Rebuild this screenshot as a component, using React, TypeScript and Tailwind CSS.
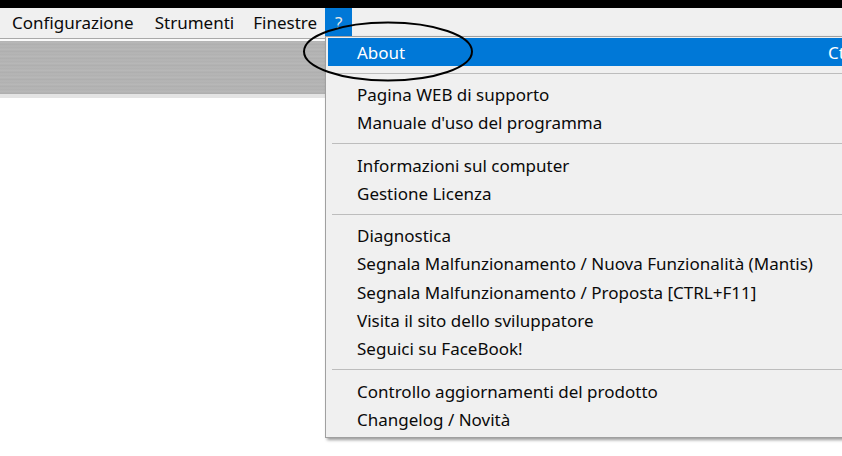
import React from 'react';

const groups: string[][] = [
  ['Pagina WEB di supporto', "Manuale d'uso del programma"],
  ['Informazioni sul computer', 'Gestione Licenza'],
  [
    'Diagnostica',
    'Segnala Malfunzionamento / Nuova Funzionalità (Mantis)',
    'Segnala Malfunzionamento / Proposta [CTRL+F11]',
    'Visita il sito dello sviluppatore',
    'Seguici su FaceBook!',
  ],
  ['Controllo aggiornamenti del prodotto', 'Changelog / Novità'],
];

const Separator = () => (
  <div className="h-[14px] flex items-center pl-[4px]">
    <div className="w-full h-px bg-[#bdbdbd]" />
  </div>
);

const MenuItem = ({ label, active, shortcut }: { label: string; active?: boolean; shortcut?: string }) => (
  <div
    className={
      'h-[28.3px] flex items-center pl-[29px] whitespace-nowrap ' +
      (active ? 'bg-[#0078d7] text-white' : 'text-[#0a0a0a]')
    }
  >
    <span className="w-[471px] shrink-0">{label}</span>
    {shortcut && <span>{shortcut}</span>}
  </div>
);

export default function App() {
  return (
    <div className="relative w-[842px] h-[456px] overflow-hidden bg-white font-['Noto_Sans',sans-serif] text-[17px] leading-none">
      <div className="h-[8px] bg-black" />
      <div className="h-[29px] bg-[#f0f0f0] flex items-stretch pl-px text-[#0a0a0a]">
        <div className="px-[11px] flex items-center">Configurazione</div>
        <div className="pl-[10px] pr-[9px] flex items-center">Strumenti</div>
        <div className="pl-[10px] pr-[8px] flex items-center">Finestre</div>
        <div className="px-[10px] flex items-center bg-[#0078d7] text-[#e8e8e8]">?</div>
      </div>
      <div className="h-px bg-[#f0f0f0]" />
      <div className="h-px bg-[#a9a9a9]" />
      <div className="h-[2px] bg-[#fafafa]" />
      <div className="h-[53px] bg-[repeating-linear-gradient(180deg,#b3b3b3_0px,#b9b9b9_2px,#adadad_3px,#b6b6b6_5px,#b0b0b0_7px)]" />
      <div className="h-[4px] bg-[#e4e4e4]" />

      <div className="absolute left-[325px] top-[36px] w-[560px] bg-[#f0f0f0] border border-[#a0a0a0] pt-px pl-[2px] pb-[3px] shadow-[2px_2px_3px_rgba(0,0,0,0.4)]">
        <MenuItem label="About" active shortcut="Ctrl+F1" />
        {groups.map((g, i) => (
          <div key={i}>
            <Separator />
            {g.map((l) => (
              <MenuItem key={l} label={l} />
            ))}
          </div>
        ))}
      </div>

      <svg className="absolute left-[301px] top-[20px]" width="174" height="63" viewBox="0 0 174 63">
        <ellipse cx="87" cy="31.5" rx="84" ry="29" fill="none" stroke="#000" strokeWidth="2" />
      </svg>
    </div>
  );
}
